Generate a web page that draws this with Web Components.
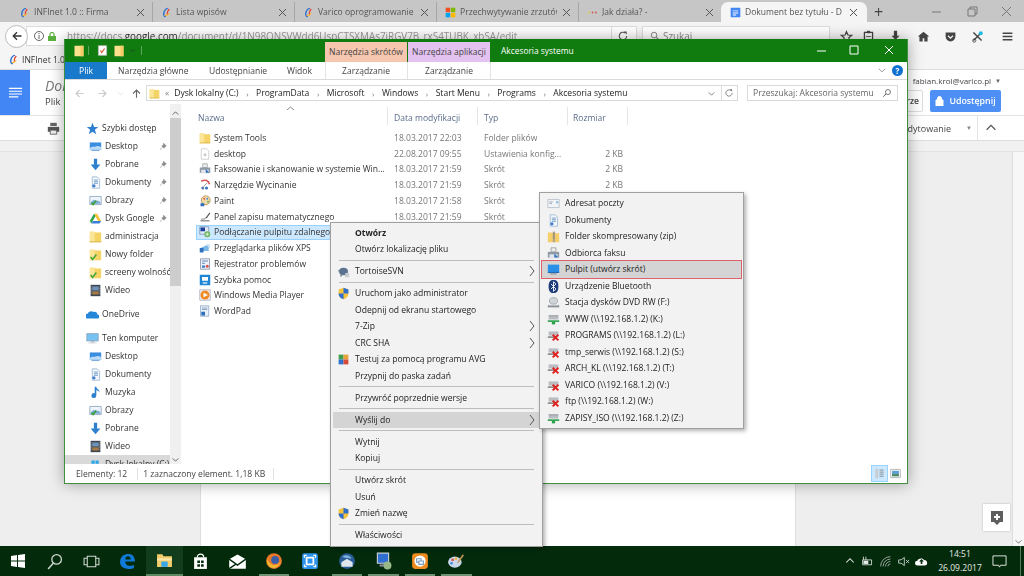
<!DOCTYPE html>
<html lang="pl">
<head>
<meta charset="utf-8">
<title>Wyślij do</title>
<style>
  html, body { margin: 0; padding: 0; }
  body {
    width: 1024px; height: 576px; overflow: hidden; position: relative;
    display: flex; flex-direction: column;
    font-family: "Open Sans", "Noto Sans", sans-serif; font-size: 8.550px; color: #333;
  }
  x-browser, x-explorer, x-menu { filter: blur(.3px); }
</style>
</head>
<body>
<x-browser></x-browser>
<x-taskbar></x-taskbar>
<x-explorer></x-explorer>

<x-menu style="left:330px;top:221.500px;width:213px">
  <x-item bold>Otwórz</x-item>
  <x-item>Otwórz lokalizację pliku</x-item>
  <x-sep></x-sep>
  <x-item icon="tortoise" arrow>TortoiseSVN</x-item>
  <x-sep></x-sep>
  <x-item icon="shield">Uruchom jako administrator</x-item>
  <x-item>Odepnij od ekranu startowego</x-item>
  <x-item arrow>7-Zip</x-item>
  <x-item arrow>CRC SHA</x-item>
  <x-item icon="avg">Testuj za pomocą programu AVG</x-item>
  <x-item>Przypnij do paska zadań</x-item>
  <x-sep></x-sep>
  <x-item>Przywróć poprzednie wersje</x-item>
  <x-sep></x-sep>
  <x-item arrow hot>Wyślij do</x-item>
  <x-sep></x-sep>
  <x-item>Wytnij</x-item>
  <x-item>Kopiuj</x-item>
  <x-sep></x-sep>
  <x-item>Utwórz skrót</x-item>
  <x-item>Usuń</x-item>
  <x-item icon="shield">Zmień nazwę</x-item>
  <x-sep></x-sep>
  <x-item>Właściwości</x-item>
</x-menu>

<x-menu style="left:539px;top:192px;width:205px">
  <x-item icon="mail" sub>Adresat poczty</x-item>
  <x-item icon="docs" sub>Dokumenty</x-item>
  <x-item icon="zip" sub>Folder skompresowany (zip)</x-item>
  <x-item icon="fax" sub>Odbiorca faksu</x-item>
  <x-item icon="screen" sub hot marked>Pulpit (utwórz skrót)</x-item>
  <x-item icon="bluetooth" sub>Urządzenie Bluetooth</x-item>
  <x-item icon="dvd" sub>Stacja dysków DVD RW (F:)</x-item>
  <x-item icon="netok" sub>WWW (\\192.168.1.2) (K:)</x-item>
  <x-item icon="netx" sub>PROGRAMS (\\192.168.1.2) (L:)</x-item>
  <x-item icon="netx" sub>tmp_serwis (\\192.168.1.2) (S:)</x-item>
  <x-item icon="netx" sub>ARCH_KL (\\192.168.1.2) (T:)</x-item>
  <x-item icon="netx" sub>VARICO (\\192.168.1.2) (V:)</x-item>
  <x-item icon="netx" sub>ftp (\\192.168.1.2) (W:)</x-item>
  <x-item icon="netok" sub>ZAPISY_ISO (\\192.168.1.2) (Z:)</x-item>
</x-menu>

<script>
const ICONS = {
  folder: `<path d="M1 2h6l1 1h7v12H1z" fill="#f6d365"/><path d="M1 2h6v13H1z" fill="#fbe596"/><path d="M1 14.500h14" stroke="#d8b04a"/>`,
  qfolder: `<path d="M2 1h12v14H2z" fill="#fbe08e"/><path d="M10 1h4v14h-4z" fill="#f3cc63"/>`,
  file: `<path d="M3 1h7l3 3v11H3z" fill="#fff" stroke="#c4c4c4"/><circle cx="8" cy="9" r="2" fill="#ccc"/>`,
  qatfile: `<path d="M2 1h12v14H2z" fill="#fff" stroke="#bbb"/><path d="M5 8l2 3 4-6" fill="none" stroke="#d9532c" stroke-width="1.600"/>`,
  fax: `<path d="M5 1h6v5H5z" fill="#eee" stroke="#999"/><path d="M1 6h14v7H1z" fill="#8d99a6"/><path d="M3 9h10v5H3z" fill="#dfe5ea"/><path d="M9 8l5 5H9z" fill="#2f6fbd"/>`,
  snip: `<path d="M3 3c5-3 10-1 11 4" fill="none" stroke="#d9534f" stroke-width="2"/><circle cx="5" cy="12" r="2" fill="#5a7da6"/><circle cx="10" cy="12" r="2" fill="#2f6fbd"/><path d="M6 10l5-5" stroke="#777"/>`,
  paint: `<circle cx="9" cy="7" r="6" fill="#f1d9a8" stroke="#b28a4a"/><circle cx="7" cy="5" r="1.200" fill="#d9534f"/><circle cx="11" cy="5" r="1.200" fill="#3b8de0"/><circle cx="12" cy="9" r="1.200" fill="#5cb85c"/><path d="M2 11h5v4H2z" fill="#2f6fbd"/>`,
  math: `<path d="M2 12h12v2H2z" fill="#999"/><path d="M3 11c3-1 3 1 5-1s2-1 2-1" fill="none" stroke="#555"/><path d="M9 9l5-7 1 1-5 7z" fill="#444"/>`,
  rdp: `<path d="M1 1h12v10H1z" fill="#dfe9f5" stroke="#6f8fb5"/><path d="M2 2h6v5H2z" fill="#1a3e9c"/><circle cx="11" cy="11" r="4" fill="#72b865"/><path d="M9 11h4M11 9v4" stroke="#fff"/>`,
  xps: `<path d="M2 8l11-5v9H5z" fill="#7ab8e8"/><path d="M1 8h5v6H1z" fill="#2f6fbd"/><path d="M9 3h6v6z" fill="#cfe7f8"/>`,
  rej: `<path d="M2 1h12v14H2z" fill="#eef1f5" stroke="#7b8aa0"/><path d="M4 4h8M4 7h4" stroke="#3567a8"/><circle cx="11" cy="11" r="2" fill="#d9534f"/><path d="M4 10h4v3H4z" fill="#3b7ec9"/>`,
  help: `<path d="M1 1h14v14H1z" fill="#1e84d4"/><path d="M4 4h8v5H4z" fill="#fff"/><path d="M5 11h6v2H5z" fill="#cfe7f8"/>`,
  wmp: `<path d="M1 1h14v14H1z" fill="#eef1f5" stroke="#aab"/><circle cx="8" cy="8" r="6" fill="#f08a24"/><path d="M6 5l6 3-6 3z" fill="#fff"/>`,
  wordpad: `<path d="M2 1h11v14H2z" fill="#e8f0f8" stroke="#8aa4c4"/><path d="M4 4h7M4 6h7" stroke="#6f8fb5"/><path d="M3 9h5v5H3z" fill="#2f6fbd"/>`,
  star: `<path d="M8 1l2 5h5l-4 3.400 1.500 5.600L8 12l-4.500 3L5 9.400 1 6h5z" fill="#2f80d0"/>`,
  desktop: `<path d="M1 3h14v9H1z" fill="#3b8de0"/><path d="M1 10c3-3 5-1 7-2s4-1 7 1v3H1z" fill="#bcdcf5"/><path d="M3 13h10" stroke="#5a96d0"/>`,
  down: `<path d="M6 1h4v7h4l-6 7-6-7h4z" fill="#2f80d0"/>`,
  docs: `<path d="M4 1h6l3 3v11H4z" fill="#f4f8fc" stroke="#9ab5d1"/><path d="M6 5h5M6 7h5M6 9h5" stroke="#5d90c4"/><circle cx="6" cy="12" r="2" fill="#3b7ec9"/>`,
  pics: `<path d="M1 3h14v10H1z" fill="#eef4fb" stroke="#8aa0b8"/><path d="M2 10l4-3 3 2 2-1 3 2v2H2z" fill="#79a9d8"/><path d="M3 11l2 2 4-5" fill="none" stroke="#3aa23a" stroke-width="2"/>`,
  gdrive: `<path d="M6 2h4l5 9h-4z" fill="#f5c33b"/><path d="M6 2l-5 9 2 3 5-9z" fill="#2fa44f"/><path d="M3 14h10l2-3H5z" fill="#3b7ed9"/>`,
  okfolder: `<path d="M1 2h6l1 1h7v12H1z" fill="#f6d365"/><path d="M1 2h6v13H1z" fill="#fbe596"/><path d="M2 11l2.500 3L9 8" fill="none" stroke="#4aa83a" stroke-width="2"/>`,
  video: `<path d="M2 1h12v14H2z" fill="#3d4653"/><path d="M4 3h8v5H4z" fill="#6f93b8"/><path d="M4 9h8v4H4z" fill="#a47a46"/><path d="M2.500 3v10M13.500 3v10" stroke="#ddd" stroke-dasharray="1 1"/>`,
  cloud: `<path d="M2 13a3 3 0 0 1 0-6c1-3 5-4 7-2 3-1 5 1 5 3a2.500 2.500 0 0 1 0 5z" fill="#2487d8"/>`,
  pc: `<path d="M1 2h14v9H1z" fill="#78c2f2" stroke="#8aa0b8"/><path d="M6 11h4v2H6z" fill="#b0bac5"/><path d="M3 13h10v1H3z" fill="#c6cdd5"/>`,
  music: `<path d="M7 1h2c0 3 4 3 4 7-1-2-2-2-4-3v7a3 3 0 1 1-2-3z" fill="#2f80d0"/>`,
  drive: `<path d="M3 3h4v4H3zM8 3h4v4H8zM3 8h4v4H3zM8 8h4v4H8z" fill="#29a7e8"/>`,
  tortoise: `<ellipse cx="8" cy="8" rx="5.500" ry="4.500" fill="#5b7390"/><path d="M1 6l3 1-1 3zM4 12h2v2H4zM10 12h2v2h-2z" fill="#6e8398"/><path d="M10 10h5v5h-5z" fill="#c9ccd0"/>`,
  shield: `<path d="M8 1l6 2v5c0 4-3 6-6 7-3-1-6-3-6-7V3z" fill="#f5c33b"/><path d="M8 1l6 2v5H8zM8 8H2c0 4 3 6 6 7z" fill="#2f6fd0"/>`,
  avg: `<path d="M2 2h6v6H2z" fill="#3f9f4a"/><path d="M8 2h6v6H8z" fill="#e8a23a"/><path d="M2 8h6v6H2z" fill="#2f6fd0"/><path d="M8 8h6v6H8z" fill="#d64a3a"/>`,
  mail: `<path d="M1 3h14v10H1z" fill="#f2f5f8" stroke="#b5bec8"/><path d="M3 6h4M3 8h3" stroke="#8a97a5"/><path d="M11 5h3v3h-3z" fill="#9fc0e0"/>`,
  zip: `<path d="M1 3h5l1 1h8v11H1z" fill="#f4cf6a"/><path d="M7 2h3v13H7z" fill="#b8a98a"/><path d="M8 4h1M8 6h1M8 8h1M8 10h1" stroke="#555"/>`,
  screen: `<path d="M1 2h14v10H1z" fill="#2a8fe6"/><path d="M1 11h14v1H1z" fill="#0d5aa8"/><path d="M4 13h8v1H4z" fill="#777"/>`,
  bluetooth: `<path d="M8 0c4 0 6 2 6 8s-2 8-6 8-6-2-6-8 2-8 6-8z" fill="#1a3c78"/><path d="M5 5l6 6-3 3V2l3 3-6 6" fill="none" stroke="#fff" stroke-width="1.100"/>`,
  dvd: `<ellipse cx="8" cy="6" rx="5" ry="4" fill="#d0d4d8" stroke="#9aa0a8"/><path d="M1 11h14v3H1z" fill="#8b9097"/><path d="M2 11h12v1H2z" fill="#c7cbd0"/>`,
  netok: `<path d="M2 3h12v5H2z" fill="#b9bdc2"/><path d="M2 3h12v1H2z" fill="#8d9298"/><path d="M1 9h14v2H1z" fill="#2aa24a"/><path d="M6 11h4v3H6z" fill="#2aa24a"/>`,
  netx: `<path d="M2 3h12v5H2z" fill="#b9bdc2"/><path d="M1 9h9v2H1z" fill="#888"/><path d="M7 7l7 7M14 7l-7 7" stroke="#e01f1f" stroke-width="2.400"/>`,
  back: `<path d="M14 8H3M8 3L3 8l5 5" fill="none" stroke="currentColor" stroke-width="1.800"/>`,
  up: `<path d="M8 14V3M3 8l5-5 5 5" fill="none" stroke="currentColor" stroke-width="1.600"/>`,
  pin: `<path d="M8 2l5 5-2 1-2 3-4-4 3-2zM6 9l-4 5" fill="#8a8a8a" stroke="#8a8a8a"/>`,
  search: `<circle cx="9.500" cy="6.500" r="4" fill="none" stroke="currentColor" stroke-width="1.400"/><path d="M6.500 9.500L2 14" stroke="currentColor" stroke-width="1.600"/>`,
  searchl: `<circle cx="6.500" cy="6.500" r="4.500" fill="none" stroke="currentColor" stroke-width="1.600"/><path d="M10 10l5 5" stroke="currentColor" stroke-width="1.800"/>`,
  chev: `<path d="M3 6l5 5 5-5" fill="none" stroke="currentColor" stroke-width="1.400"/>`,
  reload: `<path d="M13 8a5 5 0 1 1-2-4" fill="none" stroke="currentColor" stroke-width="1.400"/><path d="M9 2h4v4z" fill="currentColor"/>`,
  starline: `<path d="M8 2l1.800 4.200 4.500.4-3.400 3 1 4.400L8 11.600 4.100 14l1-4.400-3.400-3 4.500-.4z" fill="none" stroke="currentColor" stroke-width="1.500"/>`,
  clip: `<path d="M3 3h10v12H3z" fill="none" stroke="currentColor" stroke-width="1.600"/><path d="M6 1h4v3H6z" fill="currentColor"/><path d="M5 8h6" stroke="currentColor"/>`,
  dl: `<path d="M6 1h4v6h3l-5 5-5-5h3zM2 13h12v2H2z" fill="currentColor"/>`,
  home: `<path d="M8 2l7 6h-2v6H9v-4H7v4H3V8H1z" fill="currentColor"/>`,
  pocket: `<path d="M2 3h12v5a6 6 0 0 1-12 0z" fill="currentColor"/><path d="M5 7l3 3 3-3" fill="none" stroke="#f5f5f5" stroke-width="1.600"/>`,
  tools: `<path d="M3 3l10 10M13 3L3 13" stroke="#444" stroke-width="1.800"/><circle cx="4" cy="13" r="2" fill="none" stroke="#444"/><circle cx="12" cy="4" r="2.500" fill="#20b8e0"/>`,
  burger: `<path d="M2 3h12v2H2zM2 7h12v2H2zM2 11h12v2H2z" fill="currentColor"/>`,
  doclines: `<path d="M1 3h14v1.200H1zM1 6h14v1.200H1zM1 9h14v1.200H1zM1 12h10v1.200H1z" fill="#fff"/>`,
  printer: `<path d="M4 1h8v4H4z" fill="#666"/><path d="M1 6h14v6H1z" fill="#555"/><path d="M4 10h8v5H4z" fill="#eee" stroke="#555"/>`,
  comment: `<path d="M2 1h12v11h-3l-3 3-3-3H2z" fill="#5f5f5f"/><path d="M7 4h2v2h2v2H9v2H7V8H5V6h2z" fill="#fff"/>`,
  firefoxlogo: `<circle cx="8" cy="8" r="7" fill="#e8782a"/><circle cx="9" cy="7" r="3.500" fill="#3a5fa8"/><path d="M2 6c2 6 9 8 12 2-1 5-5 7-8 6-3-1-5-4-4-8z" fill="#f2b632"/>`,
  infinet: `<path d="M10 2c-3 0-6 4-6 8 0 2 1 4 3 4" fill="none" stroke="#2a6fd0" stroke-width="2"/><path d="M12 3c-2 2-3 5-3 8" fill="none" stroke="#e24a3a" stroke-width="2"/><path d="M5 12c2 1 5 0 7-3" fill="none" stroke="#f0b43a" stroke-width="1.600"/>`,
  ms: `<path d="M1 1h6.500v6.500H1z" fill="#f25022"/><path d="M8.500 1H15v6.500H8.500z" fill="#7fba00"/><path d="M1 8.500h6.500V15H1z" fill="#00a4ef"/><path d="M8.500 8.500H15V15H8.500z" fill="#ffb900"/>`,
  dots: `<circle cx="3" cy="8" r="1.300" fill="#e8c33a"/><circle cx="8" cy="8" r="1.300" fill="#d9534f"/><circle cx="13" cy="8" r="1.300" fill="#d9534f"/>`,
  gdoc: `<rect x="1" y="1" width="14" height="14" rx="1" fill="#4285f4"/><path d="M4 5h8v1.300H4zM4 8h8v1.300H4zM4 11h5v1.300H4z" fill="#fff"/>`,
  win: `<path d="M1 3l6-1v5.500H1zM8 2l7-1v6.500H8zM1 8.500h6V14l-6-1zM8 8.500h7V15l-7-1z" fill="#fff"/>`,
  cortana: `<circle cx="10" cy="6" r="4.500" fill="none" stroke="#cfd8d0" stroke-width="1.200"/><path d="M7 9.500L2 15" stroke="#cfd8d0" stroke-width="1.400"/>`,
  taskview: `<path d="M4 3h8v10H4z" fill="none" stroke="#cfd8d0"/><path d="M4 5H1v6h3M12 5h3v6h-3" fill="none" stroke="#cfd8d0"/>`,
  edge: `<path d="M1 9c0-6 4-8 8-8 4 0 6 3 6 7H6c0 3 2 4 4 4 2 0 3-.5 4-1v3c-1 .7-3 1-5 1-4 0-8-2-8-6zM6 6h5c0-2-1-3-2.500-3S6 4 6 6z" fill="#0f7ad8"/>`,
  expl: `<path d="M1 2h5l1 2h8v10H1z" fill="#f3cd6b"/><path d="M1 6h14v2H1z" fill="#fbe6a8"/><path d="M5 9h6v5H5z" fill="#38a8e8"/>`,
  store: `<path d="M2 4h12v11H2z" fill="#fff"/><path d="M5 4c0-4 6-4 6 0" fill="none" stroke="#fff" stroke-width="1.200"/><path d="M5 7h2.500v2.500H5zM8.500 7H11v2.500H8.500zM5 10.500h2.500V13H5zM8.500 10.500H11V13H8.500z" fill="#032b0c"/>`,
  mailw: `<path d="M1 6l7-4 7 4v8H1z" fill="#fff"/><path d="M1 6l7 5 7-5M1 14l6-4" fill="none" stroke="#032b0c" stroke-width="1.200"/>`,
  bluesq: `<rect x="1" y="1" width="14" height="14" rx="2" fill="#2b93ec"/><path d="M5 5h6v6H5z" fill="none" stroke="#fff" stroke-width="1.600"/><path d="M3 5V3h2M11 3h2v2M13 11v2h-2M5 13H3v-2" fill="none" stroke="#fff"/>`,
  bird: `<circle cx="8" cy="8" r="7" fill="#2a5c96"/><path d="M3 9l5-3 5 3v4H3z" fill="#dfe6ee"/><path d="M4 4c3-2 7-1 8 2-3-1-6 0-8-2z" fill="#7fb2dc"/>`,
  rdptask: `<path d="M3 1h10v9H3z" fill="#2f6fd0" stroke="#c8d0d8"/><path d="M5 11h6v2H5z" fill="#889"/><circle cx="12" cy="12" r="3.500" fill="#98b888"/>`,
  orange: `<rect x="1" y="1" width="14" height="14" rx="3" fill="#ef8a1e"/><circle cx="8" cy="8" r="5" fill="#fff"/><path d="M5 6h4v3H5z" fill="none" stroke="#7a9cc0"/><path d="M7 8h4v3H7z" fill="#fff" stroke="#7a9cc0"/>`,
  palette: `<ellipse cx="7" cy="9" rx="6" ry="5" fill="#c8d8e8"/><circle cx="5" cy="7" r="1.200" fill="#d9534f"/><circle cx="8" cy="6" r="1.200" fill="#f0b43a"/><circle cx="4" cy="10" r="1.200" fill="#3b8de0"/><path d="M9 9l5-7 1 1-5 7z" fill="#c89a5a"/>`,
  tray1: `<path d="M2 6h11v6H2z" fill="none" stroke="#e8ece8"/><path d="M3 7h6v4H3z" fill="#e8ece8"/><path d="M3 2v4M6 2v4" stroke="#e8ece8"/>`,
  wifi: `<path d="M2 14A12 12 0 0 1 14 2M5 14a9 9 0 0 1 9-9M8 14a6 6 0 0 1 6-6M11 14a3 3 0 0 1 3-3" fill="none" stroke="#b9c2ba"/>`,
  mute: `<path d="M2 6h3l4-3v10l-4-3H2z" fill="none" stroke="#dfe6df"/><path d="M11 6l4 4M15 6l-4 4" stroke="#dfe6df"/>`,
  cloudw: `<path d="M3 13a3 3 0 0 1 0-6c1-3 6-4 8-1 3 0 4 2 4 4a3 3 0 0 1-3 3z" fill="#fff"/><path d="M8 5l3 3H9v3H7V8H5z" fill="#032b0c"/>`,
  notify: `<path d="M1 2h14v10H9l-1 2-1-2H1z" fill="none" stroke="#e8ece8"/>`,
  detail: `<path d="M2 1h4v14H2z" fill="#c8ccd0"/><path d="M8 3h6M8 6h6M8 9h6M8 12h6" stroke="#666"/>`,
  large: `<path d="M1 2h14v12H1z" fill="#fff" stroke="#999"/><path d="M3 4h10v8H3z" fill="#5f9fd0"/><path d="M3 9h10v3H3z" fill="#4f8a5a"/>`
};

class XIcon extends HTMLElement {
  static get observedAttributes() { return ["name", "size"]; }
  constructor() {
    super();
    this.attachShadow({ mode: "open" });
  }
  connectedCallback() { this._render(); }
  attributeChangedCallback() { this._render(); }
  _render() {
    const size = this.getAttribute("size") || 13;
    this.shadowRoot.innerHTML = `
      <style>:host { display: inline-flex; flex: none; width: ${size}px; height: ${size}px; } svg { width: 100%; height: 100%; display: block; }</style>
      <svg viewBox="0 0 16 16">${ICONS[this.getAttribute("name")] || ""}</svg>`;
  }
}
customElements.define("x-icon", XIcon);

class XTab extends HTMLElement {
  constructor() {
    super();
    this.attachShadow({ mode: "open" });
    this.shadowRoot.innerHTML = `
      <style>
        :host { display: flex; align-items: center; box-sizing: border-box; width: 142px; height: 20px; padding: 0 6px 0 8px; gap: 4px; border-right: 1px solid #a6a6a6; color: #555; }
        :host([active]) { background: #f5f5f5; border-right: 0; border-radius: 7px 7px 0 0; width: 146px; padding: 0 8px 0 9px; }
        :host([last]) { border-right: 0; }
        .t { flex: 1; overflow: hidden; white-space: nowrap; }
        .x { width: 11px; height: 11px; stroke: #555; }
      </style>
      <x-icon id="i" size="11"></x-icon>
      <span class="t"><slot></slot></span>
      <svg class="x" viewBox="0 0 11 11"><path d="M2 2l7 7M9 2l-7 7"/></svg>`;
  }
  connectedCallback() {
    this.shadowRoot.querySelector("#i").setAttribute("name", this.getAttribute("icon"));
  }
}
customElements.define("x-tab", XTab);

class XBrowser extends HTMLElement {
  constructor() {
    super();
    this.attachShadow({ mode: "open" });
    this.shadowRoot.innerHTML = `
      <style>
        :host { display: flex; flex-direction: column; flex: 1; min-height: 0; background: #eee; }
        .tabs { display: flex; align-items: flex-end; height: 22px; box-sizing: border-box; background: #c6c6c6; padding-left: 11px; }
        .plus { margin: 0 0 2px 7px; font-size: 16px; line-height: 16px; color: #444; width: 20px; }
        .ctl { margin-left: auto; display: flex; align-self: center; }
        .ctl svg { width: 35px; height: 11px; stroke: #777; fill: none; }
        .bar { display: flex; align-items: center; height: 28px; background: #f5f5f5; }
        .backb { width: 21px; height: 21px; border: 1px solid #bbb; border-radius: 50%; background: #fff; margin-left: 5px; color: #333; display: flex; align-items: center; justify-content: center; position: relative; z-index: 1; }
        .url { display: flex; align-items: center; margin-left: -2px; width: 611px; height: 20px; box-sizing: border-box; background: #fff; border: 1px solid #dcdcdc; padding-left: 7px; font-size: 9.900px; color: #999; white-space: nowrap; overflow: hidden; }
        .url span { flex: 1; overflow: hidden; }
        .url b { font-weight: 400; color: #333; }
        .url s { width: 1px; height: 18px; background: #dcdcdc; flex: none; margin: 0 5px; }
        .find { margin-left: 5px; width: 188px; height: 20px; box-sizing: border-box; background: #fff; border: 1px solid #dcdcdc; display: flex; align-items: center; gap: 3px; padding-left: 6px; color: #888; font-size: 9.900px; }
        .tools { display: flex; align-items: center; margin-left: 10px; color: #444; }
        .marks { display: flex; align-items: center; height: 20px; gap: 3px; padding-left: 8px; background: #f5f5f5; color: #333; border-bottom: 1px solid #ddd; box-sizing: border-box; }
        .head { display: flex; height: 45px; background: #fff; }
        .logo { width: 30px; background: #4285f4; display: flex; align-items: center; justify-content: center; }
        .title { padding: 7px 0 0 15px; font-size: 14px; line-height: 17px; font-style: italic; color: #777; white-space: nowrap; }
        .title div { font-style: normal; font-size: 9.500px; color: #444; line-height: 15px; }
        .acct { margin-left: auto; display: flex; flex-direction: column; align-items: flex-end; padding: 5px 23px 0 0; color: #444; gap: 3px; }
        .who { display: flex; gap: 4px; margin-right: 0; white-space: nowrap; font-size: 8px; height: 12px; }
        .who i { font-style: normal; font-size: 6px; color: #666; line-height: 12px; }
        .btns { display: flex; gap: 7px; }
        .btn2 { display: flex; align-items: center; justify-content: flex-end; padding-right: 3px; box-sizing: border-box; width: 63px; height: 22px; background: #fff; border: 1px solid #ddd; border-radius: 2px; font-weight: 600; white-space: nowrap; }
        .share { display: flex; align-items: center; justify-content: center; gap: 5px; width: 71px; height: 22px; background: #4d8ff5; border-radius: 2px; color: #fff; font-weight: 600; font-size: 8.800px; }
        .tb { display: flex; align-items: center; height: 25px; background: #fff; border-top: 1px solid #e4e4e4; padding-left: 47px; font-size: 9px; color: #444; box-sizing: border-box; }
        .tb .ed { margin-left: auto; margin-right: 15px; }
        .tb .car { font-size: 6px; color: #888; margin-right: 5px; }
        .tb .upb { width: 47px; height: 100%; box-sizing: border-box; border-left: 1px solid #e4e4e4; color: #555; display: flex; align-items: center; padding-left: 6px; }
        .ruler { height: 12px; flex: none; background: #f1f1f1; border-top: 1px solid #ddd; border-bottom: 1px solid #e2e2e2; box-sizing: border-box; }
        .doc { flex: 1; display: flex; position: relative; min-height: 0; }
        .page { width: 596px; margin-left: 200px; background: #fff; border: solid #ddd; border-width: 0 1px; box-sizing: border-box; }
        .scroll { margin-left: auto; width: 12px; background: #f7f7f7; border-left: 1px solid #ddd; display: flex; align-items: flex-end; justify-content: center; color: #555; box-sizing: border-box; }
        .add { position: absolute; left: 983px; top: 352px; width: 27px; height: 27px; background: #fff; box-shadow: 0 0 2px rgba(0,0,0,.25); display: flex; align-items: center; justify-content: center; }
      </style>
      <div class="tabs">
        <x-tab icon="infinet">INFInet 1.0 :: Firma</x-tab>
        <x-tab icon="infinet">Lista wpisów</x-tab>
        <x-tab icon="infinet">Varico oprogramowanie</x-tab>
        <x-tab icon="ms">Przechwytywanie zrzutów</x-tab>
        <x-tab icon="dots" last>Jak działa? -</x-tab>
        <x-tab icon="gdoc" active>Dokument bez tytułu - D</x-tab>
        <span class="plus">+</span>
        <span class="ctl">
          <svg viewBox="0 0 35 11"><path d="M13 6h9"/></svg>
          <svg viewBox="0 0 35 11"><path d="M14 3h7v7h-7zM16 3V1h7v7h-2"/></svg>
          <svg viewBox="0 0 35 11"><path d="M13 1l9 9M22 1l-9 9"/></svg>
        </span>
      </div>
      <div class="bar">
        <div class="backb"><x-icon name="back" size="12"></x-icon></div>
        <div class="url">
          <svg width="10" height="10" viewBox="0 0 10 10" style="flex:none"><circle cx="5" cy="5" r="4.500" fill="none" stroke="#666"/><path d="M5 4v4M5 2v1" stroke="#666"/></svg>
          <svg width="8" height="9" viewBox="0 0 8 9" style="flex:none;margin:0 11px 0 4px"><path d="M0 4h8v5H0z" fill="#5cb040"/><path d="M2 4V2.500a2 2 0 0 1 4 0V4" fill="none" stroke="#5cb040" stroke-width="1.200"/></svg>
          <span>https://docs.<b>google.com</b>/document/d/1N98ONSVWdd6UspCTSXMAs7iRGV7B_rxS4TUBK_xbSA/edit</span>
          <s></s>
          <x-icon name="reload" size="12" style="color:#555;margin-right:7px"></x-icon>
        </div>
        <div class="find"><x-icon name="searchl" size="10" style="margin-left:1px"></x-icon>Szukaj</div>
        <div class="tools">
          <x-icon name="starline"></x-icon>
          <x-icon name="clip" style="margin-left:9px"></x-icon>
          <x-icon name="dl" style="margin-left:14px"></x-icon>
          <x-icon name="home" style="margin-left:15px"></x-icon>
          <x-icon name="pocket" style="margin-left:14px"></x-icon>
          <x-icon name="tools" style="margin-left:14px"></x-icon>
          <x-icon name="burger" style="margin-left:17px"></x-icon>
        </div>
      </div>
      <div class="marks"><x-icon name="infinet" size="11"></x-icon>INFInet 1.0</div>
      <div class="head">
        <div class="logo"><x-icon name="doclines" size="15"></x-icon></div>
        <div class="title">Dokument bez tytułu<div>Plik</div></div>
        <div class="acct">
          <div class="who">fabian.krol@varico.pl <i>▼</i></div>
          <div class="btns">
            <div class="btn2">Komentarze</div>
            <div class="share"><svg width="9" height="10" viewBox="0 0 9 10"><path d="M1 4h7v6H1zM2.500 4V2.500a2 2 0 0 1 4 0V4" fill="#fff" stroke="#fff"/></svg>Udostępnij</div>
          </div>
        </div>
      </div>
      <div class="tb"><x-icon name="printer"></x-icon><span class="ed">Edytowanie</span><span class="car">▼</span><span class="upb"><x-icon name="chev" size="14" style="transform:scaleY(-1)"></x-icon></span></div>
      <div class="ruler"></div>
      <div class="doc">
        <div class="page"></div>
        <div class="scroll"><x-icon name="chev" size="9"></x-icon></div>
        <div class="add"><x-icon name="comment" size="16"></x-icon></div>
      </div>`;
  }
}
customElements.define("x-browser", XBrowser);

class XTaskbar extends HTMLElement {
  constructor() {
    super();
    this.attachShadow({ mode: "open" });
    const apps = [["win",16],["cortana",17],["taskview",17],["edge",17],["expl",17,"active"],["store",17],["mailw",19],["firefoxlogo",18,"run"],["bluesq",18],["bird",18,"run"],["rdptask",18,"run"],["orange",18,"run"],["palette",18,"run"]];
    this.shadowRoot.innerHTML = `
      <style>
        :host { display: flex; align-items: center; height: 30px; flex: none; background: #022a0b; color: #e8ece8; position: relative; }
        .app { width: 36.500px; height: 30px; box-sizing: border-box; display: flex; align-items: center; justify-content: center; position: relative; }
        .app.active { background: #123d1c; border-bottom: 2px solid #5d8a62; }
        .app.run::after { content: ""; position: absolute; left: 3px; right: 3px; bottom: 0; height: 2px; background: #6f9274; }
        .tray { margin-left: auto; display: flex; align-items: center; gap: 5px; }
        .clock { width: 54px; text-align: center; line-height: 14px; }
        .end { margin-right: 3px; width: 1px; height: 30px; background: #5d7a62; }
      </style>
      ${apps.map(a => `<div class="app ${a[2] || ""}"><x-icon name="${a[0]}" size="${a[1]}"></x-icon></div>`).join("")}
      <div class="tray">
        <x-icon name="chev" size="12" style="transform:scaleY(-1)"></x-icon>
        <x-icon name="tray1"></x-icon>
        <x-icon name="wifi"></x-icon>
        <x-icon name="mute"></x-icon>
        <x-icon name="cloudw"></x-icon>
        <div class="clock">14:51<br>26.09.2017</div>
        <x-icon name="notify" size="15" style="margin-right:8px"></x-icon>
        <div class="end"></div>
      </div>`;
  }
}
customElements.define("x-taskbar", XTaskbar);

class XNav extends HTMLElement {
  constructor() {
    super();
    this.attachShadow({ mode: "open" });
    this.shadowRoot.innerHTML = `
      <style>
        :host { display: flex; flex: none; align-items: center; height: 18px; gap: 3px; padding-left: 24px; white-space: nowrap; overflow: hidden; }
        :host([top]) { padding-left: 21px; }
        :host([hot]) { background: #d9d9d9; }
        .pin { margin-left: auto; margin-right: 2px; }
      </style>
      <x-icon id="i"></x-icon><span><slot></slot></span>`;
  }
  connectedCallback() {
    this.shadowRoot.querySelector("#i").setAttribute("name", this.getAttribute("icon"));
    if (this.hasAttribute("pin")) {
      const p = document.createElement("x-icon");
      p.setAttribute("name", "pin");
      p.setAttribute("size", "9");
      p.className = "pin";
      this.shadowRoot.appendChild(p);
    }
  }
}
customElements.define("x-nav", XNav);

class XRow extends HTMLElement {
  constructor() {
    super();
    this.attachShadow({ mode: "open" });
    this.shadowRoot.innerHTML = `
      <style>
        :host { display: grid; grid-template-columns: 198px 90px 89px 50px; height: 15.750px; align-items: center; white-space: nowrap; }
        .n { display: flex; align-items: center; gap: 3px; padding-left: 3px; height: 100%; box-sizing: border-box; }
        :host([sel]) .n { background: #cce8ff; outline: 1px solid #99d1ff; outline-offset: -1px; }
        .m { color: #777; }
        .s { text-align: right; color: #777; }
      </style>
      <div class="n"><x-icon id="i" size="12"></x-icon><span><slot></slot></span></div>
      <div class="m" id="d"></div><div class="m" id="t"></div><div class="s" id="z"></div>`;
  }
  connectedCallback() {
    const sr = this.shadowRoot;
    sr.querySelector("#i").setAttribute("name", this.getAttribute("icon"));
    sr.querySelector("#d").textContent = this.getAttribute("date") || "";
    sr.querySelector("#t").textContent = this.getAttribute("type") || "";
    sr.querySelector("#z").textContent = this.getAttribute("size") || "";
  }
}
customElements.define("x-row", XRow);

class XExplorer extends HTMLElement {
  constructor() {
    super();
    this.attachShadow({ mode: "open" });
    const crumbs = ["Dysk lokalny (C:)", "ProgramData", "Microsoft", "Windows", "Start Menu", "Programs", "Akcesoria systemu"];
    this.shadowRoot.innerHTML = `
      <style>
        :host { position: absolute; left: 64px; top: 39px; width: 844px; height: 445px; box-sizing: border-box; border: 1px solid #3f8f3f; border-top: 0; background: #fff; display: flex; flex-direction: column; box-shadow: 0 0 14px rgba(0,0,0,.35); }
        .title { display: flex; align-items: flex-end; height: 23px; background: #107c10; flex: none; }
        .qat { display: flex; align-items: center; height: 23px; padding-left: 8px; width: 260px; box-sizing: border-box; color: #222; }
        .qat s { width: 1px; height: 9px; background: #5da25d; }
        .ctx { width: 82px; height: 20px; margin-right: 1px; display: flex; align-items: center; justify-content: center; color: #444; white-space: nowrap; }
        .name { align-self: center; margin-left: 10px; color: #fff; font-size: 8.400px; white-space: nowrap; }
        .wb { margin-left: auto; display: flex; align-self: center; }
        .wb svg { width: 35px; height: 11px; stroke: #fff; fill: none; }
        .ribbon { display: flex; align-items: center; height: 17px; flex: none; border-bottom: 1px solid #dadada; color: #444; white-space: nowrap; position: relative; box-sizing: content-box; }
        .plik { width: 42px; height: 17px; background: #1979ca; color: #fff; display: flex; align-items: center; justify-content: center; }
        .ribbon span { position: absolute; }
        .ribbon s { position: absolute; top: 0; width: 1px; height: 17px; background: #e4e4e4; }
        .addr { display: flex; align-items: center; height: 24px; padding-top: 2px; box-sizing: border-box; flex: none; color: #999; }
        .crumbs { display: flex; align-items: center; width: 592px; height: 16px; margin-left: 4px; box-sizing: border-box; border: 1px solid #dadada; white-space: nowrap; color: #222; padding-left: 2px; }
        .crumbs i { font-style: normal; color: #777; margin: 0 7.500px; font-size: 8px; }
        .sb { margin-left: 9px; width: 151px; height: 16px; box-sizing: border-box; border: 1px solid #dadada; display: flex; align-items: center; padding: 0 5px; color: #666; justify-content: space-between; white-space: nowrap; }
        .body { flex: 1; display: flex; min-height: 0; }
        .side { width: 105px; flex: none; display: flex; flex-direction: column; overflow: hidden; padding-top: 15px; box-sizing: border-box; }
        .gap { height: 6px; flex: none; }
        .vs { width: 11px; flex: none; background: #f0f0f0; position: relative; color: #444; }
        .thumb { position: absolute; top: 14px; left: 0; right: 0; height: 168px; background: #cdcdcd; }
        .vs x-icon { position: absolute; left: 1px; }
        .list { flex: 1; padding-left: 15px; position: relative; }
        .cols { display: grid; grid-template-columns: 192px 90px 90px 60px; height: 24px; align-items: center; margin-bottom: 2px; color: #5a6d8c; position: relative; }
        .cols > div { padding-left: 5px; height: 18px; line-height: 22px; border-right: 1px solid #e5e5e5; }
        .cols > div:first-child { padding-left: 2px; }
        .caret { position: absolute; left: 106px; top: 2px; width: 7px; height: 4px; fill: none; stroke: #888; }
        .status { display: flex; align-items: center; height: 19px; flex: none; padding-left: 11px; color: #444; }
        .status s { width: 1px; height: 12px; background: #e0e0e0; }
        .views { margin-left: auto; display: flex; align-items: center; gap: 2px; margin-right: 6px; }
        .cur { display: flex; padding: 2px; background: #cce8ff; border: 1px solid #99d1ff; }
      </style>
      <div class="title">
        <div class="qat">
          <x-icon name="qfolder" size="12"></x-icon><s style="margin-left:3px"></s>
          <x-icon name="qatfile" size="11" style="margin-left:8px"></x-icon>
          <x-icon name="qfolder" size="12" style="margin-left:5px"></x-icon>
          <x-icon name="chev" size="7" style="margin-left:4px"></x-icon><s style="margin-left:5px"></s>
        </div>
        <div class="ctx" style="background:#f7c6ae">Narzędzia skrótów</div>
        <div class="ctx" style="background:#e3c2f1">Narzędzia aplikacji</div>
        <div class="name">Akcesoria systemu</div>
        <div class="wb">
          <svg viewBox="0 0 35 11"><path d="M15 6h9"/></svg>
          <svg viewBox="0 0 35 11"><path d="M13 1h8v8h-8z"/></svg>
          <svg viewBox="0 0 35 11"><path d="M13 1l8 8M21 1l-8 8"/></svg>
        </div>
      </div>
      <div class="ribbon">
        <div class="plik">Plik</div>
        <span style="left:53px">Narzędzia główne</span>
        <span style="left:144px">Udostępnianie</span>
        <span style="left:222px">Widok</span>
        <s style="left:260px"></s>
        <span style="left:277px">Zarządzanie</span>
        <s style="left:342px"></s>
        <span style="left:360px">Zarządzanie</span>
        <s style="left:425px"></s>
        <span style="left:812px;color:#888;width:11px;top:3px"><x-icon name="chev" size="10"></x-icon></span>
        <span style="left:827px;top:3px;width:11px;height:11px;border-radius:50%;background:#1072d0;color:#fff;font-size:8px;line-height:11px;text-align:center;font-weight:700">?</span>
      </div>
      <div class="addr">
        <x-icon name="back" size="11" style="margin-left:9px;color:#ccc"></x-icon>
        <x-icon name="back" size="11" style="margin-left:12px;color:#ccc;transform:scaleX(-1)"></x-icon>
        <x-icon name="chev" size="7" style="margin-left:9px;color:#ccc"></x-icon>
        <x-icon name="up" size="11" style="margin-left:7px;color:#666"></x-icon>
        <div class="crumbs"><x-icon name="folder" size="11"></x-icon><span style="color:#888;margin:0 5px 0 5px">«</span>${crumbs.map(c => `<span>${c}</span>`).join("<i>›</i>")}<x-icon name="chev" size="9" style="margin-left:auto;color:#666"></x-icon><span style="width:1px;height:14px;background:#dadada;margin:0 2px 0 5px"></span><x-icon name="reload" size="10" style="color:#777;margin-right:3px"></x-icon></div>
        <div class="sb">Przeszukaj: Akcesoria systemu<x-icon name="search" size="10"></x-icon></div>
      </div>
      <div class="body">
        <div class="side">
          <x-nav top icon="star">Szybki dostęp</x-nav>
          <x-nav icon="desktop" pin>Desktop</x-nav>
          <x-nav icon="down" pin>Pobrane</x-nav>
          <x-nav icon="docs" pin>Dokumenty</x-nav>
          <x-nav icon="pics" pin>Obrazy</x-nav>
          <x-nav icon="gdrive" pin>Dysk Google</x-nav>
          <x-nav icon="folder">administracja</x-nav>
          <x-nav icon="okfolder">Nowy folder</x-nav>
          <x-nav icon="okfolder">screeny wolność</x-nav>
          <x-nav icon="video">Wideo</x-nav>
          <div class="gap"></div>
          <x-nav top icon="cloud">OneDrive</x-nav>
          <div class="gap"></div>
          <x-nav top icon="pc">Ten komputer</x-nav>
          <x-nav icon="desktop">Desktop</x-nav>
          <x-nav icon="docs">Dokumenty</x-nav>
          <x-nav icon="music">Muzyka</x-nav>
          <x-nav icon="pics">Obrazy</x-nav>
          <x-nav icon="down">Pobrane</x-nav>
          <x-nav icon="video">Wideo</x-nav>
          <x-nav hot icon="drive">Dysk lokalny (C:)</x-nav>
        </div>
        <div class="vs">
          <div class="thumb"></div>
          <x-icon name="chev" size="9" style="top:5px;transform:scaleY(-1)"></x-icon>
          <x-icon name="chev" size="9" style="bottom:0"></x-icon>
        </div>
        <div class="list">
          <svg class="caret" viewBox="0 0 7 4"><path d="M0 4l3.500-3L7 4"/></svg>
          <div class="cols"><div>Nazwa</div><div style="padding-left:6px">Data modyfikacji</div><div style="padding-left:6px">Typ</div><div>Rozmiar</div></div>
          <x-row icon="folder" date="18.03.2017 22:03" type="Folder plików">System Tools</x-row>
          <x-row icon="file" date="22.08.2017 09:55" type="Ustawienia konfig..." size="2 KB">desktop</x-row>
          <x-row icon="fax" date="18.03.2017 21:59" type="Skrót" size="2 KB">Faksowanie i skanowanie w systemie Win...</x-row>
          <x-row icon="snip" date="18.03.2017 21:59" type="Skrót" size="2 KB">Narzędzie Wycinanie</x-row>
          <x-row icon="paint" date="18.03.2017 21:58" type="Skrót">Paint</x-row>
          <x-row icon="math" date="18.03.2017 21:59" type="Skrót">Panel zapisu matematycznego</x-row>
          <x-row sel icon="rdp">Podłączanie pulpitu zdalnego</x-row>
          <x-row icon="xps">Przeglądarka plików XPS</x-row>
          <x-row icon="rej">Rejestrator problemów</x-row>
          <x-row icon="help">Szybka pomoc</x-row>
          <x-row icon="wmp">Windows Media Player</x-row>
          <x-row icon="wordpad">WordPad</x-row>
        </div>
      </div>
      <div class="status">Elementy: 12<s style="margin:0 5px 0 10px"></s>1 zaznaczony element. 1,18 KB<s style="margin-left:8px"></s>
        <div class="views"><span class="cur"><x-icon name="detail" size="11"></x-icon></span><x-icon name="large" size="11"></x-icon></div>
      </div>`;
  }
}
customElements.define("x-explorer", XExplorer);

class XMenu extends HTMLElement {
  constructor() {
    super();
    this.attachShadow({ mode: "open" });
    this.shadowRoot.innerHTML = `
      <style>
        :host { position: absolute; box-sizing: border-box; padding: 2px; background: #f2f2f2; border: 1px solid #a0a0a0; box-shadow: 2px 2px 4px rgba(0,0,0,.3); display: flex; flex-direction: column; color: #222; }
      </style>
      <slot></slot>`;
  }
}
customElements.define("x-menu", XMenu);

class XItem extends HTMLElement {
  constructor() {
    super();
    this.attachShadow({ mode: "open" });
    this.shadowRoot.innerHTML = `
      <style>
        :host { display: flex; align-items: center; height: 16.500px; flex: none; box-sizing: border-box; padding-left: 22px; white-space: nowrap; position: relative; }
        :host([sub]) { padding-left: 23px; }
        :host([bold]) { font-weight: 700; }
        :host([hot]) { background: #d4d4d4; }
        :host([marked]) { outline: 1px solid #e0606a; }
        #i { position: absolute; left: 4px; top: 2px; display: none; }
        :host([icon]) #i { display: inline-flex; }
        :host([sub]) #i { left: 5px; }
        .arrow { position: absolute; right: 5px; top: 3px; width: 6px; height: 10px; fill: none; stroke: #555; display: none; }
        :host([arrow]) .arrow { display: block; }
      </style>
      <x-icon id="i"></x-icon>
      <span><slot></slot></span>
      <svg class="arrow" viewBox="0 0 6 10"><path d="M1 0l4 5-4 5"/></svg>`;
  }
  connectedCallback() {
    this.shadowRoot.querySelector("#i").setAttribute("name", this.getAttribute("icon") || "");
  }
}
customElements.define("x-item", XItem);

class XSep extends HTMLElement {
  constructor() {
    super();
    this.attachShadow({ mode: "open" });
    this.shadowRoot.innerHTML = `<style>:host { display: block; flex: none; height: 5.500px; box-sizing: border-box; padding: 2px 6px 0; } div { height: 1px; background: #bdbdbd; }</style><div></div>`;
  }
}
customElements.define("x-sep", XSep);
</script>
</body>
</html>
